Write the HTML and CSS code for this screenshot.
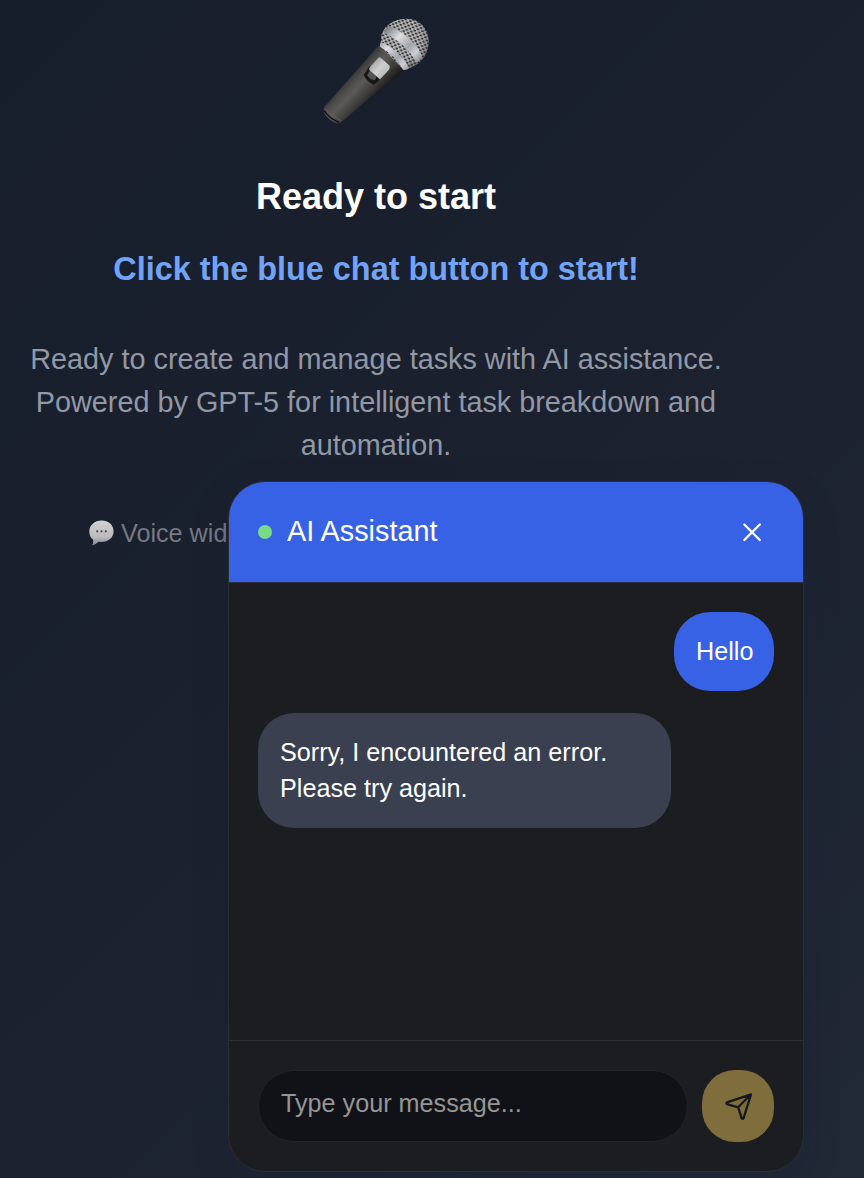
FILE: index.html
```html
<!DOCTYPE html>
<html lang="en">
<head>
<meta charset="utf-8">
<title>AI Assistant</title>
<link rel="stylesheet" href="styles.css">
</head>
<body>
<main class="hero">
  <svg class="mic" viewBox="0 0 390 375" aria-hidden="true">
    <defs>
      <linearGradient id="handle" gradientUnits="userSpaceOnUse" x1="112" y1="202" x2="187" y2="272">
        <stop offset="0" stop-color="#353535"/><stop offset=".18" stop-color="#4b4a49"/><stop offset=".4" stop-color="#5b5a57"/><stop offset=".7" stop-color="#403e3b"/><stop offset="1" stop-color="#1b1b1b"/>
      </linearGradient>
      <linearGradient id="ring" gradientUnits="userSpaceOnUse" x1="225" y1="60" x2="320" y2="160">
        <stop offset="0" stop-color="#81858b"/><stop offset=".3" stop-color="#dcdee1"/><stop offset=".6" stop-color="#a3a6ac"/><stop offset=".8" stop-color="#cdcfd4"/><stop offset="1" stop-color="#878a90"/>
      </linearGradient>
      <linearGradient id="switch" x1="0" y1="0" x2="1" y2="1">
        <stop offset="0" stop-color="#898989"/><stop offset=".5" stop-color="#d0d0d0"/><stop offset="1" stop-color="#aaa"/>
      </linearGradient>
      <radialGradient id="shade" cx=".45" cy=".4" r=".6">
        <stop offset="0" stop-color="#fff" stop-opacity=".14"/><stop offset=".65" stop-color="#555" stop-opacity="0"/><stop offset="1" stop-color="#222" stop-opacity=".5"/>
      </radialGradient>
      <pattern id="mesh" width="15" height="14" patternUnits="userSpaceOnUse" patternTransform="rotate(22)">
        <rect width="15" height="14" fill="#bcbcbd"/><ellipse cx="4" cy="3.5" rx="4.3" ry="3.1" fill="#202020"/><ellipse cx="11.5" cy="10.5" rx="4.3" ry="3.1" fill="#202020"/>
      </pattern>
    </defs>
    <path d="M207 104Q190 120 163 152L40 291Q35 302 43 315Q55 331 74 339Q86 342 96 332L200 243Q242 208 262 198L286 174Z" fill="url(#handle)"/>
    <path d="M40 302Q52 323 83 337" fill="none" stroke="#111" stroke-width="4"/>
    <path d="M43 296Q58 318 91 332" fill="none" stroke="#6b6a67" stroke-width="2"/>
    <path d="M212 72C222 43 254 26 287 26A66 66 0 0 1 353 92C354 130 331 160 299 173L276 178L208 108Z" fill="url(#mesh)"/>
    <path d="M212 72C222 43 254 26 287 26A66 66 0 0 1 353 92C354 130 331 160 299 173L276 178L208 108Z" fill="url(#shade)"/>
    <path d="M216 66Q225 51 240 50Q303 78 334 138Q329 149 318 158Q280 96 216 66Z" fill="url(#ring)"/>
    <path d="M211 96Q205 101 207 110Q251 134 276 179Q285 183 295 174Q264 120 211 96Z" fill="url(#ring)"/>
    <path d="M176 167L205 195L204 212L188 224Q166 214 158 195Z" fill="#171717"/>
    <path d="M177 181L196 199L192 211L178 207L168 196Z" fill="#555452"/>
    <path d="M202 143Q206 140 210 144L236 167Q238 171 234 179L210 205Q206 209 202 204L175 180Q173 176 177 171Z" fill="url(#switch)"/>
  </svg>
  <h1 class="title">Ready to start</h1>
  <h2 class="prompt">Click the blue chat button to start!</h2>
  <p class="description">Ready to create and manage tasks with AI assistance.<br>Powered by GPT-5 for intelligent task breakdown and<br>automation.</p>
  <p class="hint">
    <svg class="bubble" viewBox="0 0 26 26" aria-hidden="true">
      <defs><linearGradient id="balloon" x2="0" y2="1"><stop stop-color="#d2d2d3"/><stop offset=".65" stop-color="#bcbcbe"/><stop offset="1" stop-color="#858689"/></linearGradient></defs>
      <path d="M13.5 .5C20.5 .5 25.6 5 25.6 11.2S20.5 22 13 22L10.5 21.8Q7.5 25 4 25.5Q5.5 23 5.3 20C2.5 18 1.3 15 1.3 11.5C1.3 5.2 6.5 .5 13.5 .5Z" fill="url(#balloon)"/>
      <g fill="#444549"><circle cx="9.2" cy="11.3" r="1.1"/><circle cx="13.5" cy="11.3" r="1.1"/><circle cx="17.8" cy="11.3" r="1.1"/></g>
    </svg>
    <span class="hint-text">Voice widget</span>
  </p>
</main>
<section class="chat">
  <header class="chat-header">
    <span class="status"></span>
    <span class="chat-title">AI Assistant</span>
    <svg class="close" viewBox="0 0 20 20" aria-label="Close"><path d="M2.3 2.5L17.8 18M17.8 2.5L2.3 18"/></svg>
  </header>
  <div class="messages">
    <div class="message user">Hello</div>
    <div class="message bot">Sorry, I encountered an error.<br>Please try again.</div>
  </div>
  <footer class="composer">
    <div class="field">Type your message...</div>
    <div class="send"><svg viewBox="0 0 29 29" aria-label="Send"><path d="M27 2.3L3 10.4Q1.8 11.2 3 12.2L14.2 15.3L17.7 26.3Q18.6 27.4 19.5 26.3ZM27 2.3L14.2 15.3"/></svg></div>
  </footer>
</section>
</body>
</html>
```
FILE: styles.css
```css
* { box-sizing: border-box; }
body {
  position: relative;
  width: 864px;
  height: 1178px;
  margin: 0;
  overflow: hidden;
  background: linear-gradient(135deg, #171e2b 0%, #1b212e 50%, #212836 100%);
  font-family: "Liberation Sans", Arial, sans-serif;
  color: #fff;
}
.hero {
  display: flex;
  flex-direction: column;
  align-items: center;
  width: 752px;
  padding-top: 10px;
  text-align: center;
}
.mic { width: 130px; height: 125px; }
.title {
  margin: 40px 0 0;
  font-size: 36px;
  line-height: 43px;
}
.prompt {
  margin: 32px 0 0;
  font-size: 32.4px;
  line-height: 38px;
  color: #72a3f7;
}
.description {
  margin: 50px 0 0;
  font-size: 28.8px;
  line-height: 43.2px;
  color: #9298a6;
}
.hint {
  display: flex;
  align-items: center;
  align-self: flex-start;
  gap: 7px;
  margin: 47px 0 0 88px;
  font-size: 25.2px;
  line-height: 36px;
  color: #747985;
}
.bubble { width: 26px; height: 26px; }
.chat {
  position: absolute;
  left: 228px;
  top: 481px;
  display: flex;
  flex-direction: column;
  width: 576px;
  height: 691px;
  overflow: hidden;
  border: 1px solid #2b2d32;
  border-radius: 37px;
  background: #1c1d21;
  box-shadow: 0 12px 36px rgba(20, 35, 65, .2);
}
.chat-header {
  display: flex;
  align-items: center;
  height: 101px;
  padding: 0 41px 0 29px;
  border-bottom: 1px solid #2b3045;
  background: #3862e5;
}
.status { width: 14px; height: 14px; border-radius: 50%; background: #78dc87; }
.chat-title { margin-left: 15px; padding-bottom: 2px; font-size: 28.8px; line-height: 43px; }
.close { width: 20px; height: 20px; margin-left: auto; fill: none; stroke: #fff; stroke-width: 2.3; stroke-linecap: round; }
.messages {
  display: flex;
  flex: 1;
  flex-direction: column;
  gap: 22px;
  padding: 29px;
}
.message { padding: 20.5px 22px; border-radius: 36px; font-size: 25.2px; line-height: 36px; }
.user { align-self: flex-end; width: 100px; height: 79px; background: #3862e5; }
.bot { width: 413px; height: 115px; background: #3a4050; }
.composer {
  display: flex;
  gap: 14px;
  height: 131px;
  padding: 29px;
  border-top: 1px solid #2c2d32;
}
.field {
  width: 430px;
  height: 72px;
  padding: 14px 22px;
  border: 1px solid #222328;
  border-radius: 36px;
  background: #111217;
  font-size: 25.2px;
  line-height: 36px;
  color: #969695;
}
.send {
  display: flex;
  align-items: center;
  justify-content: center;
  width: 72px;
  height: 72px;
  border-radius: 33px;
  background: #806d3c;
}
.send svg { width: 29px; height: 29px; fill: none; stroke: #15181e; stroke-width: 2.3; stroke-linecap: round; stroke-linejoin: round; }
```
